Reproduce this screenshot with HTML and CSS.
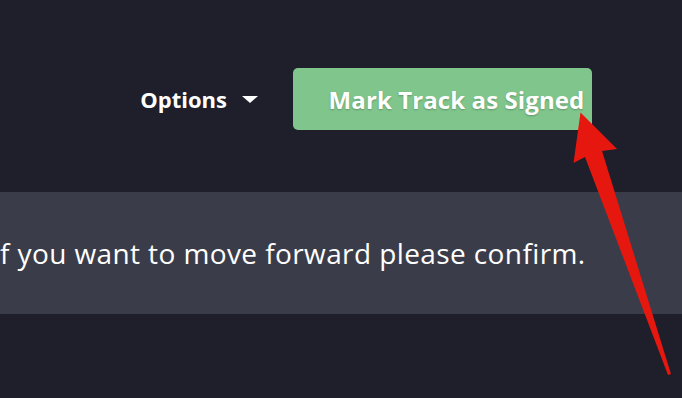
FILE: index.html
```html
<!DOCTYPE html>
<html>
<head>
<meta charset="utf-8">
<link rel="stylesheet" href="styles.css">
</head>
<body>
<div class="page">
  <header class="toolbar">
    <button class="options">Options <span class="caret"></span></button>
    <button class="primary">Mark Track as Signed</button>
  </header>
  <section class="notice">
    <p class="notice-text">f you want to move forward please confirm.</p>
  </section>
  <svg class="arrow" width="682" height="398" viewBox="0 0 682 398">
    <polygon points="580.5,112.5 617,149 602,151 671,374 668,375 585,157 573.5,163" fill="#e5170f"/>
  </svg>
</div>
</body>
</html>
```
FILE: styles.css
```css
html, body {
  margin: 0;
  padding: 0;
  background: #1e1f2b;
  width: 682px;
  height: 398px;
  overflow: hidden;
}
.page {
  position: relative;
  width: 682px;
  height: 398px;
  font-family: "Open Sans", "Noto Sans", sans-serif;
}
.toolbar {
  display: flex;
  justify-content: flex-end;
  align-items: center;
  padding: 68px 90px 0 0;
  gap: 35px;
}
.options {
  background: none;
  border: none;
  color: #ffffff;
  font-family: inherit;
  font-weight: 700;
  font-size: 22px;
  display: flex;
  align-items: center;
  gap: 15px;
  padding: 0;
}
.caret {
  width: 0;
  height: 0;
  border-left: 8px solid transparent;
  border-right: 8px solid transparent;
  border-top: 7px solid #ffffff;
}
.primary {
  width: 299px;
  height: 62px;
  background: #80c68c;
  border: none;
  border-radius: 5px;
  color: #ffffff;
  font-family: inherit;
  font-weight: 700;
  font-size: 24px;
  letter-spacing: 0.1px;
  text-shadow: 0 1px 2px rgba(0,0,0,0.25);
  padding: 0 0 0 28px;
  box-sizing: border-box;
}
.notice {
  margin-top: 62px;
  height: 122px;
  background: #3a3d49;
  display: flex;
  align-items: center;
}
.notice-text {
  margin: 0;
  color: #ffffff;
  font-size: 28px;
  letter-spacing: 0.4px;
  font-weight: 400;
  white-space: nowrap;
}
.arrow {
  position: absolute;
  left: 0;
  top: 0;
  pointer-events: none;
}
```
